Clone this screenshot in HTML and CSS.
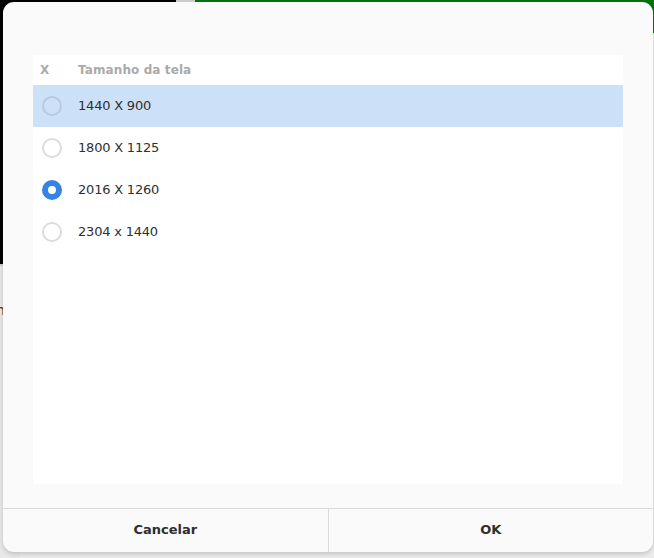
FILE: index.html
```html
<!DOCTYPE html>
<html lang="pt">
<head>
<meta charset="utf-8">
<link rel="stylesheet" href="styles.css">
</head>
<body>
<div class="desktop">
  <div class="bg-black"></div>
  <div class="bg-gray-tab"></div>
  <div class="bg-green"></div>
  <div class="bg-lower"><span class="bg-glyph">h</span></div>
  <div class="dialog">
    <div class="dialog-body">
      <div class="table">
        <div class="thead">
          <div class="col-x">X</div>
          <div class="col-name">Tamanho da tela</div>
        </div>
        <div class="row selected">
          <div class="col-x"><span class="radio"></span></div>
          <div class="col-name">1440 X 900</div>
        </div>
        <div class="row">
          <div class="col-x"><span class="radio"></span></div>
          <div class="col-name">1800 X 1125</div>
        </div>
        <div class="row">
          <div class="col-x"><span class="radio checked"></span></div>
          <div class="col-name">2016 X 1260</div>
        </div>
        <div class="row">
          <div class="col-x"><span class="radio"></span></div>
          <div class="col-name">2304 x 1440</div>
        </div>
      </div>
    </div>
    <div class="dialog-footer">
      <button class="btn">Cancelar</button>
      <button class="btn">OK</button>
    </div>
  </div>
</div>
</body>
</html>
```
FILE: styles.css
```css
html, body {
  margin: 0;
  padding: 0;
}
body {
  width: 654px;
  height: 558px;
  overflow: hidden;
  background: #ececec;
  font-family: "DejaVu Sans", "Noto Sans", sans-serif;
}
.desktop {
  position: relative;
  width: 654px;
  height: 558px;
}
.bg-black {
  position: absolute;
  left: 0;
  top: 0;
  width: 176px;
  height: 264px;
  background: #000;
}
.bg-gray-tab {
  position: absolute;
  left: 176px;
  top: 0;
  width: 19px;
  height: 6px;
  background: #cfcfcf;
}
.bg-green {
  position: absolute;
  left: 195px;
  top: 0;
  width: 459px;
  height: 33px;
  background: #06720f;
}
.bg-lower {
  position: absolute;
  left: 0;
  top: 264px;
  width: 20px;
  height: 294px;
  background: #e9e9e9;
  border-top: 2px solid #cfcfcf;
}
.bg-glyph {
  position: absolute;
  left: -4px;
  top: 36px;
  font-size: 14px;
  color: #444;
}
.dialog {
  position: absolute;
  left: 3px;
  top: 2px;
  width: 650px;
  height: 550px;
  background: #fafafa;
  border-radius: 11px;
  box-shadow: 0 2px 5px rgba(0, 0, 0, 0.18);
  display: flex;
  flex-direction: column;
  overflow: hidden;
}
.dialog-body {
  flex: 1;
  padding: 53px 30px 24px 30px;
  display: flex;
  flex-direction: column;
}
.table {
  flex: 1;
  background: #fff;
}
.thead {
  display: flex;
  align-items: center;
  height: 30px;
  font-size: 12px;
  font-weight: bold;
  color: #aaaaaa;
  letter-spacing: 0.1px;
}
.row {
  display: flex;
  align-items: center;
  height: 42px;
  font-size: 13px;
  letter-spacing: -0.2px;
  color: #303030;
}
.row .col-name {
  padding-bottom: 2px;
}
.row.selected {
  background: #cce0f7;
}
.col-x {
  width: 45px;
  padding-left: 7px;
  box-sizing: border-box;
  display: flex;
  align-items: center;
}
.row .col-x {
  padding-left: 9px;
}
.col-name {
  flex: 1;
}
.radio {
  width: 20px;
  height: 20px;
  box-sizing: border-box;
  border-radius: 50%;
  border: 2px solid #dcdcdc;
  background: #fff;
  display: block;
}
.row.selected .radio {
  background: #cce0f7;
  border-color: #b7c9dd;
}
.radio.checked {
  border: 6px solid #3584e4;
  background: #fff;
}
.dialog-footer {
  display: flex;
  height: 43px;
  border-top: 1px solid #dadada;
}
.btn {
  flex: 1;
  border: none;
  background: transparent;
  font-family: inherit;
  font-size: 13px;
  font-weight: bold;
  color: #2e2e2e;
  padding: 0 0 2px 0;
  margin: 0;
}
.btn + .btn {
  border-left: 1px solid #dadada;
}
```
